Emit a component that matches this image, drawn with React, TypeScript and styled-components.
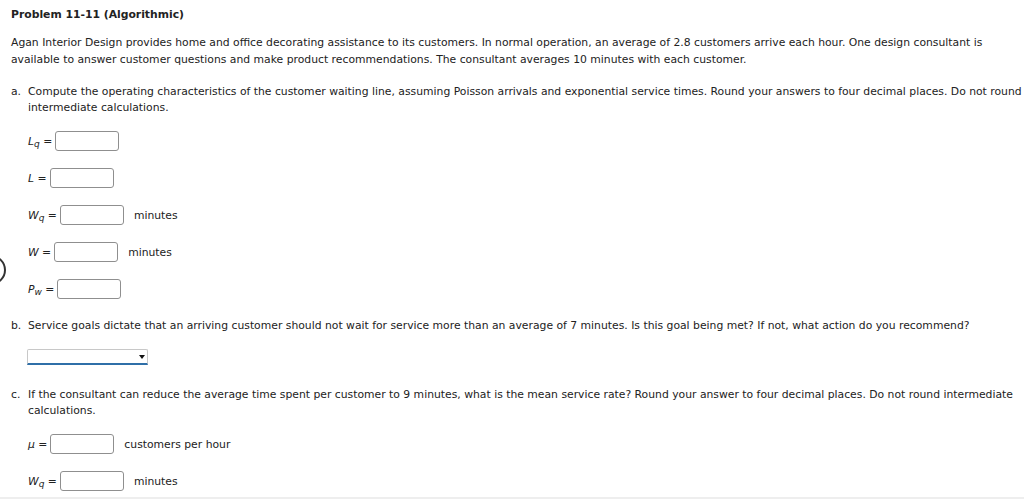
import React from "react";
import styled, { createGlobalStyle } from "styled-components";

const Global = createGlobalStyle`
  html, body { margin: 0; padding: 0; background: #fff; }
  body { font-family: "DejaVu Sans", Verdana, sans-serif; font-size: 10.8px; color: #222; overflow: hidden; }
`;

const Page = styled.div`
  position: relative;
  width: 1034px;
  height: 499px;
  padding: 6px 0 0 11px;
  box-sizing: border-box;
  border-bottom: 2px solid #eee;
`;

const Title = styled.div`
  font-weight: bold;
  line-height: 17px;
  margin-bottom: 11px;
`;

const Para = styled.p`
  margin: 0 0 16px 0;
  line-height: 17px;
`;

const Question = styled.div`
  display: flex;
  line-height: 16px;
  margin-bottom: 15px;
`;

const Marker = styled.span`
  width: 17px;
  flex: none;
`;

const QText = styled.span`
  flex: 1;
`;

const Rows = styled.div`
  display: flex;
  flex-direction: column;
  gap: 17px;
  padding-left: 17px;
  margin-bottom: 19px;
`;

const Row = styled.div`
  display: flex;
  align-items: center;
  height: 20px;
`;

const Label = styled.span`
  font-style: italic;
  margin-right: 3px;
  white-space: nowrap;
`;

const Sub = styled.sub`
  font-size: 9px;
  font-style: italic;
  vertical-align: -2px;
  line-height: 0;
`;

const Eq = styled.span`
  font-style: normal;
`;

const Box = styled.div`
  width: 64px;
  height: 20px;
  box-sizing: border-box;
  border: 1px solid #8f8f8f;
  border-radius: 3px;
  background: #fff;
`;

const Unit = styled.span`
  margin-left: 10px;
`;

const SelectWrap = styled.div`
  margin: 0 0 22px 16px;
  width: 121px;
  height: 16px;
  box-sizing: border-box;
  border: 1px solid #c8c8c8;
  border-bottom: 2px solid #2f6fa8;
  border-radius: 2px 2px 0 0;
  display: flex;
  justify-content: flex-end;
  align-items: center;
  padding-right: 2px;
`;

const Caret = styled.span`
  width: 0;
  height: 0;
  border-left: 3px solid transparent;
  border-right: 3px solid transparent;
  border-top: 4px solid #111;
`;

const Ring = styled.div`
  position: absolute;
  left: -24px;
  top: 255px;
  width: 26px;
  height: 26px;
  border: 2px solid #333;
  border-radius: 50%;
`;

type Field = { v: string; s?: string; unit?: string };

const Answer: React.FC<Field> = ({ v, s, unit }) => (
  <Row>
    <Label>
      {v}
      {s ? <Sub>{s}</Sub> : null}
      <Eq> =</Eq>
    </Label>
    <Box />
    {unit ? <Unit>{unit}</Unit> : null}
  </Row>
);

export default function App() {
  return (
    <>
      <Global />
      <Page>
        <Ring />
        <Title>Problem 11-11 (Algorithmic)</Title>
        <Para>
          Agan Interior Design provides home and office decorating assistance to its customers. In normal operation, an average of 2.8 customers arrive each hour. One design consultant is available to answer customer questions and make product recommendations. The consultant averages 10 minutes with each customer.
        </Para>
        <Question>
          <Marker>a.</Marker>
          <QText>
            Compute the operating characteristics of the customer waiting line, assuming Poisson arrivals and exponential service times. Round your answers to four decimal places. Do not round intermediate calculations.
          </QText>
        </Question>
        <Rows>
          <Answer v="L" s="q" />
          <Answer v="L" />
          <Answer v="W" s="q" unit="minutes" />
          <Answer v="W" unit="minutes" />
          <Answer v="P" s="w" />
        </Rows>
        <Question>
          <Marker>b.</Marker>
          <QText>
            Service goals dictate that an arriving customer should not wait for service more than an average of 7 minutes. Is this goal being met? If not, what action do you recommend?
          </QText>
        </Question>
        <SelectWrap>
          <Caret />
        </SelectWrap>
        <Question>
          <Marker>c.</Marker>
          <QText>
            If the consultant can reduce the average time spent per customer to 9 minutes, what is the mean service rate? Round your answer to four decimal places. Do not round intermediate calculations.
          </QText>
        </Question>
        <Rows>
          <Answer v="μ" unit="customers per hour" />
          <Answer v="W" s="q" unit="minutes" />
        </Rows>
      </Page>
    </>
  );
}
